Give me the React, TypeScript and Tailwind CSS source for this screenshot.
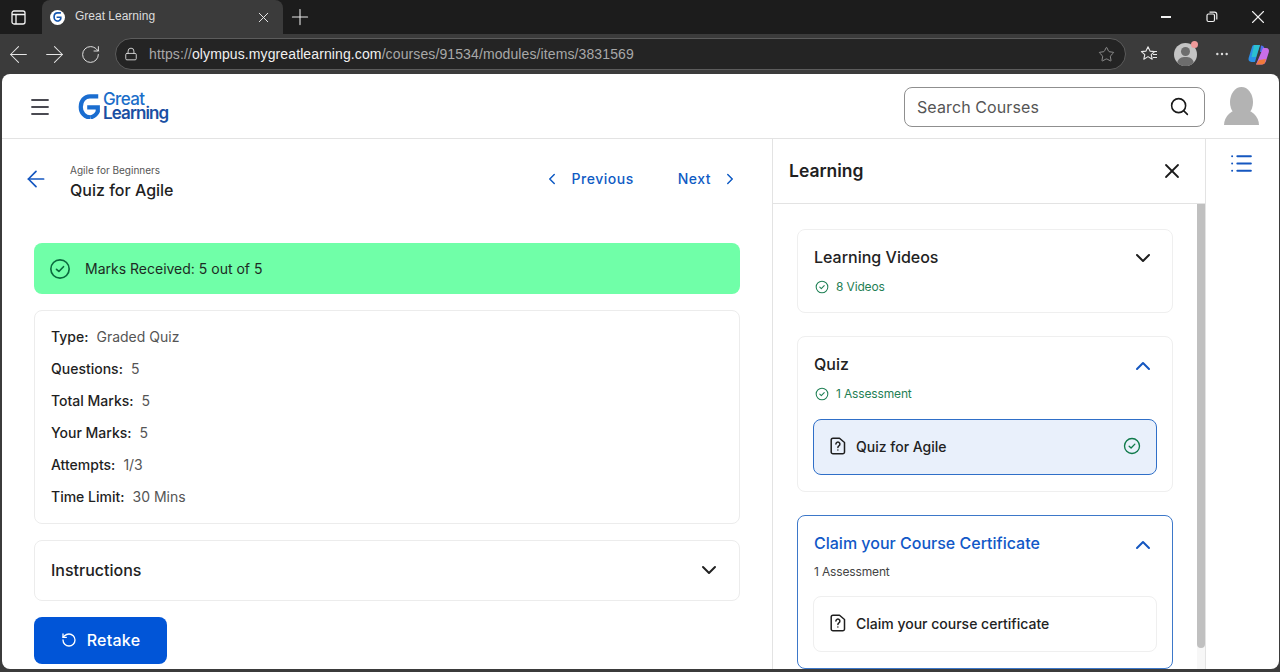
import React from "react";
import { ArrowLeft, ArrowRight, ChevronDown, ChevronLeft, ChevronRight, ChevronUp, List, Lock, Menu, MoreHorizontal, Plus, RotateCcw, RotateCw, Search, Star, X } from "lucide-react";

const CheckCircle = ({ size, color }: { size: number; color: string }) => (
  <svg width={size} height={size} viewBox="0 0 24 24" fill="none" stroke={color} strokeWidth={1.8} strokeLinecap="round" strokeLinejoin="round" className="shrink-0">
    <circle cx="12" cy="12" r="10" />
    <path d="M8.2 12.3l2.6 2.4 5-5.2" />
  </svg>
);

const DocQ = () => (
  <svg width="16" height="18" viewBox="0 0 16 18" fill="none" stroke="#1f1f1f" strokeWidth="1.5" strokeLinecap="round" strokeLinejoin="round" className="shrink-0">
    <path d="M3 1.2h6.5L14.5 5.5V15a1.8 1.8 0 0 1-1.8 1.8H3A1.8 1.8 0 0 1 1.2 15V3A1.8 1.8 0 0 1 3 1.2z" />
    <path d="M5.9 7a2 2 0 1 1 3 1.8c-.7.4-1 .8-1 1.6" />
    <path d="M7.9 13v.1" />
  </svg>
);

const GLogo = ({ size, color }: { size: number; color: string }) => (
  <svg width={size} height={size * 1.12} viewBox="0 0 25 28" fill="none" className="shrink-0">
    <path d="M22 2.500H13C7 2.500 3 7.500 3 14s4.500 11.500 10.500 11.500" stroke={color} strokeWidth="4.6" />
    <path d="M10 14.500h11.500v4.500c-1.500 3.500-4 5.500-8 6.500" stroke={color} strokeWidth="4.6" />
  </svg>
);

const Row = ({ label, value }: { label: string; value: string }) => (
  <div className="h-8 flex items-center text-[14px]">
    <span className="font-medium text-[#1f1f1f]">{label}</span>
    <span className="ml-2 text-[#555]">{value}</span>
  </div>
);

const Item = ({ text, active }: { text: string; active?: boolean }) => (
  <div className={`h-[56px] -ml-px rounded-lg flex items-center pl-4 pr-[15px] pb-[2px] border ${active ? "bg-[#e9f0fb] border-[#2f6fc8]" : "bg-white border-[#efefef]"}`}>
    <DocQ />
    <span className="ml-[10px] text-[14px] font-medium text-[#222] flex-1">{text}</span>
    {active && <CheckCircle size={18} color="#0f7a4a" />}
  </div>
);

export default function App() {
  const font = { fontFamily: "Inter, 'Liberation Sans', sans-serif" };
  return (
    <div className="w-[1280px] h-[672px] overflow-hidden bg-[#3b3b3b] flex flex-col font-['Inter',sans-serif]" style={font}>
      {/* Tab strip */}
      <div className="h-[34px] bg-[#1c1c1c] flex items-stretch shrink-0">
        <div className="w-[36px] flex items-center justify-center">
          <svg width="15" height="15" viewBox="0 0 15 15" fill="none" stroke="#f5f5f5" strokeWidth="1.3"><rect x="1" y="1" width="13" height="13" rx="2" /><path d="M1 4.500h13M5 4.500V14" /></svg>
        </div>
        <div className="w-[241px] ml-[6px] h-[34px] bg-[#3b3b3b] rounded-t-lg flex items-center pl-[8px] pr-[11px]">
          <div className="w-[15px] h-[15px] rounded-full bg-white flex items-center justify-center"><GLogo size={9} color="#1557b0" /></div>
          <span className="ml-[10px] flex-1 text-[12px] -mt-[2px] text-[#dcdcdc] font-['Liberation_Sans',sans-serif]">Great Learning</span>
          <X size={17} color="#e8e8e8" strokeWidth={1.4} />
        </div>
        <div className="ml-[3px] w-[28px] flex items-center justify-center"><Plus size={26} color="#e8e8e8" strokeWidth={1} /></div>
        <div className="flex-1" />
        <div className="flex items-center gap-[2px] text-[#f0f0f0]">
          <div className="w-[44px] flex justify-center"><div className="w-[10px] h-[1.5px] bg-[#f0f0f0]" /></div>
          <div className="w-[44px] flex justify-center">
            <svg width="12" height="12" viewBox="0 0 12 12" fill="none" stroke="#f0f0f0" strokeWidth="1.2"><rect x="1" y="3" width="7.5" height="7.5" rx="1.500" /><path d="M3.500 1.200h5a2.400 2.400 0 0 1 2.300 2.300v5" /></svg>
          </div>
          <div className="w-[44px] flex justify-center"><X size={22} strokeWidth={1.2} /></div>
        </div>
      </div>
      {/* Address bar */}
      <div className="h-10 shrink-0 flex items-center text-[#e6e6e6]">
        <div className="flex items-center w-[115px]">
          <div className="w-[36px] flex justify-center"><ArrowLeft size={27} strokeWidth={0.9} /></div>
          <div className="w-[36px] flex justify-center"><ArrowRight size={27} strokeWidth={0.9} /></div>
          <div className="w-[36px] flex justify-center"><RotateCw size={21} strokeWidth={1.1} /></div>
        </div>
        <div className="w-[1011px] h-[32px] rounded-full bg-[#242424] border border-[#5c5c5c] flex items-center pl-[8px] pr-[10px]">
          <Lock size={14} strokeWidth={1.5} color="#e0e0e0" />
          <span className="ml-[11px] mt-px text-[14px] text-[#a8a8a8] flex-1 font-['Liberation_Sans',sans-serif] tracking-[0.11px]">https://<span className="text-[#f0f0f0]">olympus.mygreatlearning.com</span>/courses/91534/modules/items/3831569</span>
          <Star size={17} strokeWidth={1.1} color="#a8a8a8" />
        </div>
        <div className="flex items-center pl-[14px]">
          <svg width="18" height="18" viewBox="0 0 18 18" fill="none" stroke="#e8e8e8" strokeWidth="1.1" strokeLinejoin="round"><path d="M8 1.800l2 4.300 4.600.5-3.400 3.100 1 4.500L8 11.600l-4.200 2.600 1-4.500L1.400 6.600 6 6.100z" /><path d="M12.500 6.500H17M13 9.500h4M13 12.500h4" /></svg>
          <div className="relative ml-[16px] w-[23px] h-[23px] rounded-full bg-[#c4c4c4] overflow-hidden">
            <div className="absolute left-[7px] top-[4px] w-[9px] h-[9px] rounded-full bg-[#6d6d6d]" />
            <div className="absolute left-[3px] top-[14px] w-[17px] h-[14px] rounded-full bg-[#6d6d6d]" />
          </div>
          <div className="w-[7px] h-[7px] rounded-full bg-[#ef9a9a] -ml-[6px] -mt-[20px] relative" />
          <MoreHorizontal size={16} strokeWidth={1.6} color="#e0e0e0" className="ml-[16px]" />
          <svg width="23" height="23" viewBox="0 0 23 23" className="ml-[17px]">
            <path d="M7 2h6l-5 17H4.500C2 19 1 17 1.700 14.800L5 4c.3-1.200 1-2 2-2z" fill="#2b8fe8" />
            <path d="M14 2.500c2 0 2.800 1 3.300 2.500l1.200 4L13 9z" fill="#4f6ff0" />
            <path d="M16 5h3c2.500 0 3.500 2 2.800 4.300L19 18c-.7 2.500-2.500 3.500-4.500 3.500H9l3-7z" fill="#c86ee8" />
            <path d="M9 21.500h6c1.500 0 2.500-.7 3-2l1-3.500-7 1z" fill="#f07a3c" />
            <path d="M7 2h6L9 14H4.500z" fill="#2ed0c8" opacity="0.75" />
          </svg>
        </div>
      </div>
      {/* Page */}
      <div className="h-[595px] mx-[2px] mr-px bg-white rounded-lg overflow-hidden flex flex-col shrink-0">
        <header className="h-[65px] shrink-0 border-b border-[#e3e3e3] flex items-center">
          <Menu size={24} color="#4a4a52" strokeWidth={1.8} className="ml-[26px] mt-[1px]" />
          <div className="ml-[26px] flex items-center mt-[1px]">
            <GLogo size={23} color="#1a6dd0" />
            <div className="ml-[2px] flex flex-col -mt-[1px]">
              <span className="text-[17px] leading-[14px] font-medium text-[#1b6ec9] tracking-[-0.6px]">Great</span>
              <span className="text-[17px] leading-[14px] font-semibold text-[#1a4fa3] tracking-[-0.9px]">Learning</span>
            </div>
          </div>
          <div className="flex-1" />
          <div className="w-[301px] h-[40px] mt-[1px] rounded-lg border border-[#8f8f8f] flex items-center pl-[12px] pr-[14px]">
            <span className="flex-1 text-[16px] text-[#555] tracking-[0.1px]">Search Courses</span>
            <Search size={21} color="#1a1a1a" strokeWidth={1.8} />
          </div>
          <div className="ml-[19px] mr-[20px] w-[35px] h-[38px] relative overflow-hidden">
            <div className="absolute left-[6px] top-0 w-[23px] h-[30px] rounded-[50%] bg-[#b3b3b3]" />
            <div className="absolute left-0 top-[22px] w-[35px] h-[32px] rounded-[50%] bg-[#b3b3b3]" />
          </div>
        </header>
        <div className="flex-1 min-h-0 flex">
          {/* Left */}
          <div className="w-[771px] shrink-0 border-r border-[#e3e3e3] pl-[32px] pr-[32px] overflow-hidden">
            <div className="h-[104px] flex pt-[24px] items-start">
              <ArrowLeft size={26} color="#1557c0" strokeWidth={1.6} className="mt-[3px] -ml-[11px]" />
              <div className="ml-[21px]">
                <div className="text-[10px] leading-[14px] text-[#555]">Agile for Beginners</div>
                <div className="text-[16px] leading-[24px] mt-[1px] font-medium text-[#1f1f1f]">Quiz for Agile</div>
              </div>
              <div className="flex-1" />
              <div className="flex items-center mt-[5px] text-[14px] font-medium text-[#0f5bc4] tracking-[0.5px]">
                <ChevronLeft size={18} strokeWidth={2} />
                <span className="ml-[11px]">Previous</span>
                <span className="ml-[44px]">Next</span>
                <ChevronRight size={18} strokeWidth={2} className="ml-[10px] mr-px" />
              </div>
            </div>
            <div className="h-[51px] rounded-lg bg-[#70ffa8] flex items-center pl-[15px]">
              <CheckCircle size={22} color="#0b6b3f" />
              <span className="ml-[14px] text-[14px] text-[#1d2b24]">Marks Received: 5 out of 5</span>
            </div>
            <div className="mt-[16px] h-[214px] rounded-lg border border-[#ececec] pl-4 pt-[9px]">
              <Row label="Type:" value="Graded Quiz" />
              <Row label="Questions:" value="5" />
              <Row label="Total Marks:" value="5" />
              <Row label="Your Marks:" value="5" />
              <Row label="Attempts:" value="1/3" />
              <Row label="Time Limit:" value="30 Mins" />
            </div>
            <div className="mt-[16px] h-[61px] rounded-lg border border-[#ececec] flex items-center pl-4 pr-[18px] pb-[2px]">
              <span className="flex-1 text-[16px] font-medium text-[#222]">Instructions</span>
              <ChevronDown size={24} color="#222" strokeWidth={2} />
            </div>
            <button className="mt-[16px] w-[133px] h-[47px] rounded-lg bg-[#0155d7] flex items-center justify-center pb-[2px] text-white text-[16px] font-medium tracking-[0.25px]">
              <RotateCcw size={16} strokeWidth={2} />
              <span className="ml-[10px]">Retake</span>
            </button>
          </div>
          {/* Learning panel */}
          <div className="w-[432px] shrink-0 flex flex-col min-h-0">
            <div className="h-[65px] shrink-0 border-b border-[#e3e3e3] flex items-center pl-4 pr-[21px]">
              <span className="flex-1 text-[17.5px] font-semibold text-[#1f1f1f]">Learning</span>
              <X size={24} color="#1a1a1a" strokeWidth={1.8} />
            </div>
            <div className="flex-1 min-h-0 flex">
              <div className="flex-1 overflow-hidden pl-[24px] pr-[24px] pt-[25px]">
                <div className="h-[84px] rounded-lg border border-[#efefef] pl-4 pr-[17px] pt-[15px]">
                  <div className="flex items-center justify-between h-6">
                    <span className="text-[16px] font-medium text-[#222]">Learning Videos</span>
                    <ChevronDown size={24} color="#1f1f1f" strokeWidth={2} className="mt-[2px]" />
                  </div>
                  <div className="flex items-center mt-[9px] ml-px text-[12px] text-[#1f8055] tracking-[-0.15px]"><CheckCircle size={14} color="#1f8055" /><span className="ml-[7px]">8 Videos</span></div>
                </div>
                <div className="mt-[23px] h-[156px] rounded-lg border border-[#efefef] pl-4 pr-[15px] pt-[15px]">
                  <div className="flex items-center justify-between h-6 pr-[2px]">
                    <span className="text-[16px] font-medium text-[#222]">Quiz</span>
                    <ChevronUp size={24} color="#1557c0" strokeWidth={2} className="mt-[3px]" />
                  </div>
                  <div className="flex items-center mt-[9px] ml-px text-[12px] text-[#1f8055] tracking-[-0.15px]"><CheckCircle size={14} color="#1f8055" /><span className="ml-[7px]">1 Assessment</span></div>
                  <div className="mt-[16px]"><Item text="Quiz for Agile" active /></div>
                </div>
                <div className="mt-[23px] h-[154px] rounded-lg border border-[#3d78c9] pl-4 pr-[15px] pt-[15px]">
                  <div className="flex items-center justify-between h-6 pr-[2px]">
                    <span className="text-[16px] font-medium text-[#1158c7]">Claim your Course Certificate</span>
                    <ChevronUp size={24} color="#1557c0" strokeWidth={2} className="mt-[4px]" />
                  </div>
                  <div className="mt-[10px] h-[14px] flex items-center text-[12px] text-[#444] tracking-[-0.15px]">1 Assessment</div>
                  <div className="mt-[17px]"><Item text="Claim your course certificate" /></div>
                </div>
              </div>
              <div className="w-2 shrink-0 bg-[#f7f7f7]">
                <div className="h-[444px] bg-[#c0c0c0] rounded-b-[4px]" />
              </div>
            </div>
          </div>
          {/* Rail */}
          <div className="flex-1 border-l border-[#e3e3e3] flex justify-center pt-[12px]">
            <List size={25} color="#1557c0" strokeWidth={1.9} className="mr-[2px]" />
          </div>
        </div>
      </div>
    </div>
  );
}
